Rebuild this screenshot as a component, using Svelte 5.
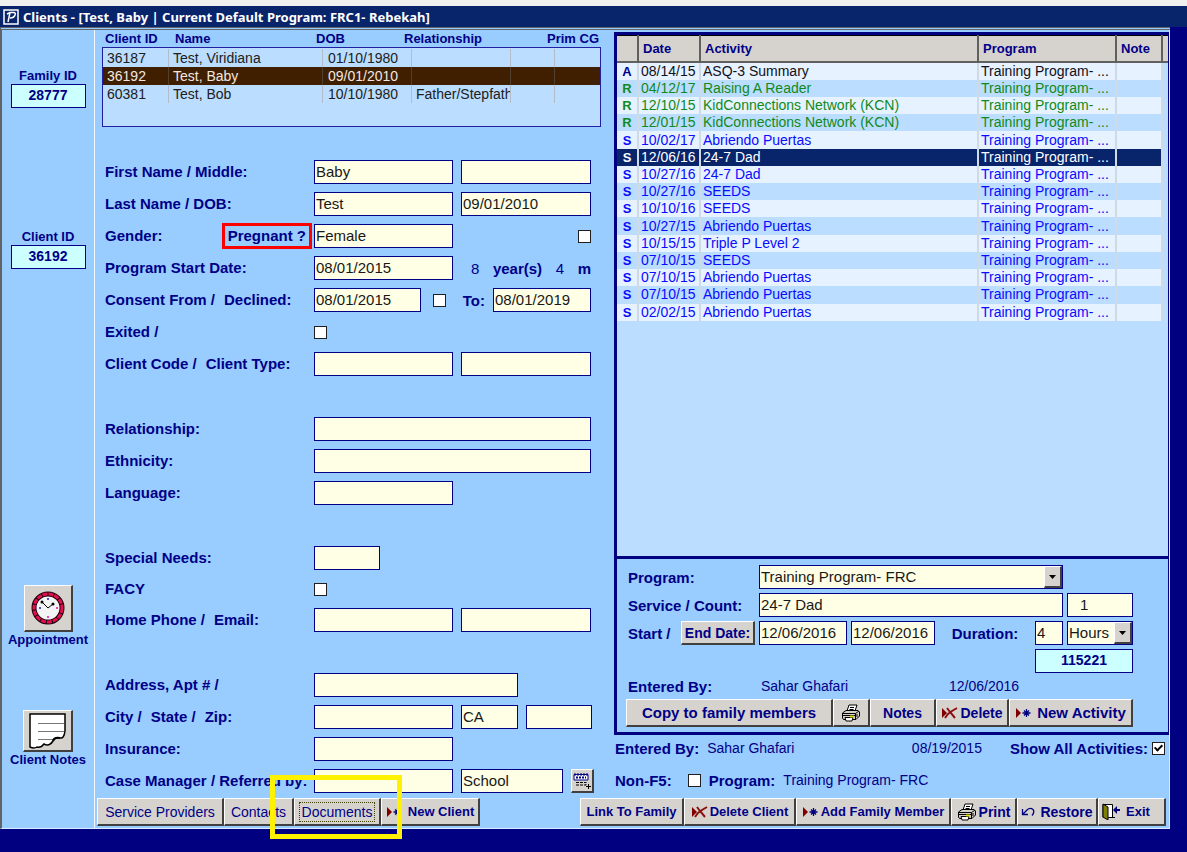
<script lang="ts">
  type Client = { id: string; name: string; dob: string; relationship: string };
  type Activity = { code: string; date: string; activity: string; selected?: boolean };

  const clients: Client[] = [
    { id: '36187', name: 'Test, Viridiana', dob: '01/10/1980', relationship: '' },
    { id: '36192', name: 'Test, Baby', dob: '09/01/2010', relationship: '' },
    { id: '60381', name: 'Test, Bob', dob: '10/10/1980', relationship: 'Father/Stepfath' }
  ];

  const activities: Activity[] = [
    { code: 'A', date: '08/14/15', activity: 'ASQ-3 Summary' },
    { code: 'R', date: '04/12/17', activity: 'Raising A Reader' },
    { code: 'R', date: '12/10/15', activity: 'KidConnections Network (KCN)' },
    { code: 'R', date: '12/01/15', activity: 'KidConnections Network (KCN)' },
    { code: 'S', date: '10/02/17', activity: 'Abriendo Puertas' },
    { code: 'S', date: '12/06/16', activity: '24-7 Dad', selected: true },
    { code: 'S', date: '10/27/16', activity: '24-7 Dad' },
    { code: 'S', date: '10/27/16', activity: 'SEEDS' },
    { code: 'S', date: '10/10/16', activity: 'SEEDS' },
    { code: 'S', date: '10/27/15', activity: 'Abriendo Puertas' },
    { code: 'S', date: '10/15/15', activity: 'Triple P Level 2' },
    { code: 'S', date: '07/10/15', activity: 'SEEDS' },
    { code: 'S', date: '07/10/15', activity: 'Abriendo Puertas' },
    { code: 'S', date: '07/10/15', activity: 'Abriendo Puertas' },
    { code: 'S', date: '02/02/15', activity: 'Abriendo Puertas' }
  ];

  let selectedClient = $state('36192');
</script>

{#snippet printer()}
  <svg class="icon" width="20" height="18" viewBox="0 0 20 18" aria-hidden="true">
    <path d="M6 7 L8 1 H16 L14 7 Z" fill="#fff" stroke="#000" />
    <path d="M9 3.500 H13 M8.500 5.500 H12.500" stroke="#000" />
    <path d="M1.500 9 L5 6.500 H17 L18.500 8 V12 L15 15.500 H2.500 L1.500 14 Z" fill="#d4d0c8" stroke="#000" />
    <path d="M1.500 9.500 H14.500 L18 7 M14.500 9.500 V15 M2 11.500 H14 M16 10 V13" stroke="#000" fill="none" />
    <path d="M4 13.500 H12 L11 17 H5 Z" fill="#fff" stroke="#000" />
    <path d="M9 12.500 H13" stroke="#e8e000" stroke-width="2" />
  </svg>
{/snippet}

{#snippet addMark()}
  <svg class="icon" width="17" height="12" viewBox="0 0 17 12" aria-hidden="true">
    <path d="M1 1 L6 6 L1 11 Z" fill="#800000" />
    <path d="M11.500 2 V10 M7.500 6 H15.500 M9 3.500 L14 8.500 M14 3.500 L9 8.500" stroke="#000080" stroke-width="1.300" />
  </svg>
{/snippet}

{#snippet deleteMark()}
  <svg class="icon" width="17" height="12" viewBox="0 0 17 12" aria-hidden="true">
    <path d="M1 1 L6 6 L1 11 Z" fill="#800000" />
    <path d="M4 11 L7 7 L11 4 L16 1 M6 1 L9 5 L14 11" stroke="#8c1010" stroke-width="2" fill="none" />
  </svg>
{/snippet}

{#snippet arrow()}
  <span class="arrow">
    <svg width="7" height="4" viewBox="0 0 7 4" aria-hidden="true"><path d="M0 0 H7 L3.500 4 Z" fill="#000" /></svg>
  </span>
{/snippet}

<div class="app">
  <header class="title-bar">
    <svg width="16" height="16" viewBox="0 0 16 16" aria-hidden="true">
      <rect x="1" y="1" width="14" height="14" fill="#08246b" stroke="#fff" stroke-width="1.500" />
      <path d="M7 3.500 L5 13 M4 5 L7 3.500 H11 Q13 4 12 6 Q11 9 7 9" fill="none" stroke="#fff" stroke-width="1.500" />
    </svg>
    <h1>Clients - [Test, Baby | Current Default Program: FRC1- Rebekah]</h1>
  </header>

  <div class="window">
    <aside class="sidebar">
      <label class="caption" for="family-id">Family ID</label>
      <input id="family-id" class="id-box" value="28777" />
      <label class="caption client-caption" for="client-id">Client ID</label>
      <input id="client-id" class="id-box" value="36192" />

      <button class="tool appointment" aria-labelledby="appointment-text">
        <svg width="34" height="34" viewBox="0 0 34 34" aria-hidden="true">
          <circle cx="17" cy="17" r="14" fill="#f4f4f4" stroke="#200010" stroke-width="5" />
          <circle cx="17" cy="17" r="14" fill="none" stroke="#e0104c" stroke-width="3" stroke-dasharray="5 1" />
          <path d="M11 11 L17 17 L22 13" stroke="#000" stroke-width="1" fill="none" />
          <circle cx="11" cy="11" r="1.500" /><circle cx="22" cy="13" r="1.500" />
          <path d="M16 8 H18 M8 17 H10" stroke="#5050e0" stroke-width="2" />
          <path d="M16 26 H18 M25 17 H27" stroke="#f040d0" stroke-width="2" />
        </svg>
      </button>
      <span class="caption" id="appointment-text">Appointment</span>

      <button class="tool notes" aria-labelledby="notes-text">
        <svg width="38" height="36" viewBox="0 0 38 36" aria-hidden="true">
          <path d="M1 1 H36 V18 Q35 26 31 25 Q26 24 24 28 Q20 34 15 31 Q12 35 8 34 Q5 36 1 34 Z" fill="#fff" stroke="#000" stroke-width="1.500" />
          <path d="M9 10.500 H35 M9 18.500 H35 M9 26.500 H24" stroke="#777" />
          <path d="M24 28 Q25 24 31 25" stroke="#000" stroke-width="2" fill="none" />
        </svg>
      </button>
      <span class="caption" id="notes-text">Client Notes</span>
    </aside>

    <div class="main">
      <div class="columns">
        <section class="client">
          <table class="client-list">
            <thead>
              <tr><th>Client ID</th><th>Name</th><th>DOB</th><th>Relationship</th><th>Prim CG</th></tr>
            </thead>
            <tbody>
              {#each clients as client}
                <tr class:selected={client.id === selectedClient} onclick={() => (selectedClient = client.id)}>
                  <td>{client.id}</td>
                  <td>{client.name}</td>
                  <td>{client.dob}</td>
                  <td>{client.relationship}</td>
                  <td></td>
                  <td></td>
                </tr>
              {/each}
            </tbody>
          </table>

          <form class="details">
            <div class="group">
              <div class="row">
                <label for="first-name">First Name / Middle:</label>
                <input id="first-name" class="w-main" value="Baby" />
                <input class="w-side" aria-label="Middle name" />
              </div>
              <div class="row">
                <label for="last-name">Last Name / DOB:</label>
                <input id="last-name" class="w-main" value="Test" />
                <input class="w-side" aria-label="Date of birth" value="09/01/2010" />
              </div>
              <div class="row gender">
                <div class="split">
                  <label for="gender">Gender:</label>
                  <label class="pregnant" for="pregnant">Pregnant ?</label>
                </div>
                <input id="gender" class="w-main" value="Female" />
                <input id="pregnant" class="push" type="checkbox" />
              </div>
              <div class="row">
                <label for="start-date">Program Start Date:</label>
                <input id="start-date" class="w-main" value="08/01/2015" />
                <div class="age"><span>8</span><b>year(s)</b><span>4</span><b>m</b></div>
              </div>
              <div class="row">
                <div class="pair"><label for="consent">Consent From /</label><label for="declined">Declined:</label></div>
                <input id="consent" class="w-date" value="08/01/2015" />
                <input id="declined" class="declined" type="checkbox" />
                <label class="push" for="consent-to">To:</label>
                <input id="consent-to" class="w-until" value="08/01/2019" />
              </div>
              <div class="row">
                <label for="exited">Exited /</label>
                <input id="exited" type="checkbox" />
              </div>
              <div class="row">
                <div class="pair"><label for="client-code">Client Code /</label><label for="client-type">Client Type:</label></div>
                <input id="client-code" class="w-main" />
                <input id="client-type" class="w-side" />
              </div>
            </div>

            <div class="group">
              <div class="row">
                <label for="relationship">Relationship:</label>
                <input id="relationship" class="w-full" />
              </div>
              <div class="row">
                <label for="ethnicity">Ethnicity:</label>
                <input id="ethnicity" class="w-full" />
              </div>
              <div class="row">
                <label for="language">Language:</label>
                <input id="language" class="w-main" />
              </div>
            </div>

            <div class="group tight">
              <div class="row">
                <label for="needs">Special Needs:</label>
                <input id="needs" class="w-small" />
              </div>
              <div class="row">
                <label for="facy">FACY</label>
                <input id="facy" type="checkbox" />
              </div>
              <div class="row">
                <div class="pair"><label for="phone">Home Phone /</label><label for="email">Email:</label></div>
                <input id="phone" class="w-main" />
                <input id="email" class="w-side" />
              </div>
            </div>

            <div class="group">
              <div class="row">
                <label for="address">Address, Apt # /</label>
                <input id="address" class="w-address" />
              </div>
              <div class="row">
                <div class="pair"><label for="city">City /</label><label for="state">State /</label><label for="zip">Zip:</label></div>
                <input id="city" class="w-main" />
                <input id="state" class="w-state" value="CA" />
                <input id="zip" class="w-small" />
              </div>
              <div class="row">
                <label for="insurance">Insurance:</label>
                <input id="insurance" class="w-main" />
              </div>
              <div class="row">
                <label for="manager">Case Manager / Referred by:</label>
                <input id="manager" class="w-main" />
                <input class="w-referred" aria-label="Referred by" value="School" />
                <button class="pick push" type="button" aria-label="Add referral">
                  <svg width="18" height="16" viewBox="0 0 18 16" aria-hidden="true">
                    <path d="M1 1.500 H15 V7 H1 Z" fill="#fff" stroke="#000080" />
                    <path d="M1 1.500 H15 M3 4.500 H13" stroke="#000080" stroke-width="2" stroke-dasharray="2 1" />
                    <path d="M3 9.500 H13 M3 12 H13 V9" stroke="#000" stroke-dasharray="3 1" fill="none" />
                    <path d="M15.500 11 V16 M13 13.500 H18" stroke="#000" />
                  </svg>
                </button>
              </div>
            </div>
          </form>
        </section>

        <section class="activity">
          <div class="activity-list">
            <table class="activities">
              <colgroup>
                <col class="c-code" /><col class="c-date" /><col /><col class="c-program" /><col class="c-note" /><col class="c-end" />
              </colgroup>
              <thead>
                <tr><th></th><th>Date</th><th>Activity</th><th>Program</th><th>Note</th><th></th></tr>
              </thead>
              <tbody>
                {#each activities as item}
                  <tr class="type-{item.code}" class:selected={item.selected}>
                    <td class="code">{item.code}</td>
                    <td>{item.date}</td>
                    <td>{item.activity}</td>
                    <td>Training Program- ...</td>
                    <td></td>
                    <td class="end"></td>
                  </tr>
                {/each}
              </tbody>
            </table>
          </div>

          <form class="activity-form">
            <div class="act-row">
              <label for="program">Program:</label>
              <div class="select w-program">
                <select id="program"><option>Training Program- FRC</option></select>
                {@render arrow()}
              </div>
            </div>
            <div class="act-row">
              <label for="service">Service / Count:</label>
              <input id="service" class="w-program" value="24-7 Dad" />
              <input class="w-small count" aria-label="Count" value="1" />
            </div>
            <div class="act-row">
              <div class="split">
                <label for="start">Start /</label>
                <button class="end-date" type="button">End Date:</button>
              </div>
              <input id="start" class="w-start" value="12/06/2016" />
              <input class="w-end" aria-label="End date" value="12/06/2016" />
              <label class="duration" for="duration">Duration:</label>
              <input id="duration" class="w-amount" value="4" />
              <div class="select w-small">
                <select aria-label="Duration unit"><option>Hours</option></select>
                {@render arrow()}
              </div>
            </div>
            <div class="act-row right">
              <input class="id-box w-number" aria-label="Activity number" value="115221" />
            </div>
            <div class="act-row entered">
              <b>Entered By:</b>
              <span class="by">Sahar Ghafari</span>
              <span>12/06/2016</span>
            </div>
            <div class="bar">
              <button class="b-copy large" type="button">Copy to family members</button>
              <button class="b-print" type="button" aria-label="Print">{@render printer()}</button>
              <button class="b-notes" type="button">Notes</button>
              <button class="b-delete" type="button">{@render deleteMark()}Delete</button>
              <button class="b-activity large" type="button">{@render addMark()}New Activity</button>
            </div>
          </form>

          <div class="info">
            <b>Entered By:</b>
            <span>Sahar Ghafari</span>
            <span class="push">08/19/2015</span>
            <label class="show-all" for="show-all">Show All Activities:</label>
            <input id="show-all" type="checkbox" checked />
          </div>
          <div class="info">
            <label class="non" for="non-f5">Non-F5:</label>
            <input id="non-f5" type="checkbox" />
            <b>Program:</b>
            <span>Training Program- FRC</span>
          </div>
        </section>
      </div>

      <footer class="footer">
        <div class="bar">
          <button class="b-providers plain">Service Providers</button>
          <button class="b-contacts plain">Contacts</button>
          <div class="marked">
            <button class="b-documents plain"><span>Documents</span></button>
            <i class="highlight"></i>
          </div>
          <button class="b-client small">{@render addMark()}New Client</button>
        </div>
        <div class="bar">
          <button class="b-link small">Link To Family</button>
          <button class="b-remove small">{@render deleteMark()}Delete Client</button>
          <button class="b-member small">{@render addMark()}Add Family Member</button>
          <button class="b-printer">{@render printer()}Print</button>
          <button class="b-restore">
            <svg class="icon" width="14" height="10" viewBox="0 0 14 10" aria-hidden="true">
              <path d="M1.500 2 V7.500 H7 M1.500 7.500 L6 3 Q9 0 12 2.500 Q14 5 11 8.500" fill="none" stroke="#000080" stroke-width="1.300" />
            </svg>Restore
          </button>
          <button class="b-exit small">
            <svg class="icon" width="19" height="17" viewBox="0 0 19 17" aria-hidden="true">
              <path d="M1 14.500 V1.500 H10.500 V14.500 H6" fill="#fff" stroke="#000" />
              <path d="M1 1 L6 4 V17 L1 14 Z" fill="#808000" stroke="#000" />
              <path d="M11 7 L15 3 V6 H18 V8 H15 V11 Z" fill="#000080" />
              <path d="M10 14.500 H13" stroke="#000" />
            </svg>Exit
          </button>
        </div>
      </footer>
    </div>
  </div>
</div>

<style>
  :global(body) {
    background: #000080;
  }

  .app {
    box-sizing: border-box;
    min-height: 100vh;
    font-family: "Liberation Sans", Arial, sans-serif;
    font-size: 15px;
    color: #000087;
    border-top: 6px solid #f0f0f0;
  }

  .app *,
  .app *::before {
    box-sizing: border-box;
  }

  .title-bar {
    display: flex;
    align-items: center;
    gap: 4px;
    height: 21px;
    padding-left: 3px;
    background: #08246b;
    color: #fff;
  }

  h1 {
    margin: 0;
    font-family: "Noto Sans", "Open Sans", sans-serif;
    font-size: 13px;
    line-height: 20px;
    white-space: nowrap;
  }

  .window {
    display: grid;
    grid-template-columns: 92px minmax(0, 1fr);
    margin-right: 17px;
    background: #99ccff;
    border-top: 3px double #606468;
    border-left: 2px solid #606468;
    border-bottom: 1px solid #d8ecff;
  }

  .main {
    border-left: 1px solid #f0f8ff;
    border-right: 1px solid #d8ecff;
  }

  .columns {
    display: grid;
    grid-template-columns: 519px minmax(0, 1fr);
  }

  label,
  b {
    font-weight: bold;
    white-space: nowrap;
  }

  input,
  select,
  button {
    margin: 0;
    font-family: inherit;
    font-size: 15px;
    color: inherit;
    border-radius: 0;
    flex: none;
  }

  input,
  select {
    height: 24px;
    padding: 0 1px 2px;
    background: #ffffe6;
    color: #181818;
    border: 1px solid #000087;
    outline: none;
  }

  input[type='checkbox'] {
    display: grid;
    place-items: center;
    width: 13px;
    height: 13px;
    padding: 0;
    appearance: none;
    background: #fff;
    border: 1px solid #202020;
  }

  input[type='checkbox']:checked::before {
    content: '';
    width: 5px;
    height: 8px;
    margin-bottom: 2px;
    border: solid #000;
    border-width: 0 2px 2px 0;
    transform: rotate(45deg);
  }

  .push {
    margin-left: auto;
  }

  /* sidebar */
  .sidebar {
    display: flex;
    flex-direction: column;
    align-items: center;
    padding-top: 38px;
  }

  .caption {
    font-size: 13px;
    font-weight: bold;
    line-height: 16px;
    white-space: nowrap;
  }

  .id-box {
    width: 75px;
    background: #ccffff;
    color: #000087;
    font-size: 14px;
    font-weight: bold;
    text-align: center;
  }

  .client-caption {
    margin-top: 121px;
  }

  /* buttons */
  button {
    display: flex;
    align-items: center;
    justify-content: center;
    gap: 2px;
    height: 28px;
    padding: 0;
    background: #d6d3ce;
    border: solid;
    border-width: 1px 2px 2px 1px;
    border-color: #fff #404040 #404040 #fff;
    font-size: 14px;
    font-weight: bold;
    white-space: nowrap;
  }

  .tool.appointment {
    width: 49px;
    height: 47px;
    margin-top: 316px;
  }

  .tool.notes {
    width: 50px;
    height: 42px;
    margin-top: 62px;
  }

  button.plain {
    font-weight: normal;
  }

  button.small {
    font-size: 13px;
  }

  button.large {
    gap: 5px;
    font-size: 15px;
  }

  .icon {
    flex: none;
  }

  .bar {
    display: flex;
  }

  /* client list */
  .client {
    padding-left: 7px;
  }

  .client-list {
    display: block;
    width: 499px;
    font-size: 14px;
  }

  .client-list thead,
  .client-list tbody {
    display: block;
  }

  .client-list tr {
    display: grid;
    grid-template-columns: 66px 154px 89px 99px 44px 1fr;
  }

  .client-list thead tr {
    grid-template-columns: 70px 141px 88px 143px 1fr;
    padding-left: 3px;
  }

  .client-list th {
    padding: 0;
    font-size: 13px;
    line-height: 17px;
    text-align: left;
    white-space: nowrap;
  }

  .client-list tbody {
    height: 80px;
    padding-top: 1px;
    background: #bbddff;
    border: 1px solid #2020a0;
    color: #202020;
  }

  .client-list td {
    height: 18px;
    padding: 0 0 0 4px;
    line-height: 18px;
    white-space: nowrap;
    overflow: hidden;
    border-right: 1px solid #b4bcc8;
  }

  .client-list td:nth-child(3) {
    padding-left: 5px;
  }

  .client-list td:last-child {
    border-right: 0;
  }

  .client-list tr.selected {
    background: #401f00;
    color: #f0e8e0;
  }

  .client-list tr.selected td {
    border-color: #504030;
  }

  /* client form */
  .details {
    display: flex;
    flex-direction: column;
    gap: 41px;
    padding: 33px 0 0 3px;
  }

  .group {
    display: flex;
    flex-direction: column;
    gap: 8px;
  }

  .group.tight {
    gap: 7px;
  }

  .row {
    display: flex;
    align-items: center;
    gap: 8px;
    width: 486px;
    height: 24px;
  }

  .row > :first-child {
    width: 201px;
    flex: none;
    line-height: 20px;
  }

  .pair {
    display: flex;
    gap: 9px;
  }

  .split {
    display: flex;
    align-items: center;
    justify-content: space-between;
  }

  .gender {
    gap: 2px;
  }

  .gender > .split:first-child {
    width: 207px;
  }

  .pregnant {
    padding: 0 3px;
    border: 3px solid #f00;
  }

  .declined {
    margin-left: 4px;
  }

  .age {
    display: flex;
    flex: 1;
    justify-content: space-between;
    padding-left: 10px;
  }

  .w-main {
    width: 139px;
  }

  .w-side {
    width: 130px;
  }

  .w-date {
    width: 107px;
  }

  .w-until {
    width: 98px;
  }

  .w-full {
    width: 277px;
  }

  .w-small {
    width: 66px;
  }

  .w-address {
    width: 204px;
  }

  .w-state {
    width: 57px;
  }

  .w-referred {
    width: 102px;
  }

  .pick {
    width: 23px;
    height: 24px;
  }

  /* activity list */
  .activity {
    padding-top: 2px;
  }

  .activity-list {
    height: 527px;
    background: #bbddff;
    border: solid #000080;
    border-width: 3px 1px 3px 3px;
  }

  .activities {
    width: 100%;
    height: 286px;
    table-layout: fixed;
    border-collapse: collapse;
    border-top: 1px solid #000;
    font-size: 14px;
  }

  .c-code {
    width: 21px;
  }

  .c-date {
    width: 62px;
  }

  .c-program {
    width: 138px;
  }

  .c-note {
    width: 46px;
  }

  .c-end {
    width: 6px;
  }

  .activities th {
    height: 26px;
    padding: 0 4px;
    background: #d6d3ce;
    border: solid #606060;
    border-width: 0 2px 2px 0;
    font-size: 13px;
    text-align: left;
  }

  .activities th:last-child {
    padding: 0;
    border-right: 0;
  }

  .activities td {
    padding: 0 2px;
    line-height: 17px;
    white-space: nowrap;
    overflow: hidden;
    border-right: 2px solid #d0dae4;
  }

  .activities .code {
    padding: 0;
    font-size: 13px;
    font-weight: bold;
    text-align: center;
  }

  .activities tbody tr:nth-child(odd) {
    background: #e6f2ff;
  }

  .activities tbody .end {
    padding: 0;
    background: #bbddff;
    border-right: 0;
  }

  .type-A {
    color: #101020;
  }

  .type-A .code {
    color: #000087;
  }

  .type-R {
    color: #108a20;
  }

  .type-S {
    color: #0a0aff;
  }

  .activities tbody tr.selected {
    background: #08246b;
    color: #fff;
  }

  /* activity form */
  .activity-form {
    display: flex;
    flex-direction: column;
    gap: 4px;
    padding: 6px 0 5px 9px;
    border: solid #000080;
    border-width: 0 1px 3px 3px;
  }

  .act-row {
    display: flex;
    align-items: center;
    gap: 4px;
    width: 507px;
    height: 24px;
    padding-left: 2px;
  }

  .act-row > :first-child {
    width: 127px;
    flex: none;
  }

  .act-row .w-program {
    width: 304px;
  }

  .w-start {
    width: 88px;
  }

  .w-end {
    width: 84px;
  }

  .w-amount {
    width: 28px;
  }

  .act-row.right {
    justify-content: flex-end;
  }

  .act-row .w-number {
    width: 98px;
  }

  .count {
    padding-left: 12px;
  }

  .duration {
    margin: 0 auto;
  }

  .end-date {
    width: 74px;
    height: 24px;
  }

  .act-row.entered {
    height: 18px;
    font-size: 14px;
  }

  .entered b,
  .info b {
    font-size: 15px;
  }

  .entered .by {
    width: 186px;
    padding-left: 2px;
  }

  .select {
    display: grid;
    flex: none;
  }

  .select select {
    grid-area: 1 / 1;
    width: 100%;
    appearance: none;
  }

  .arrow {
    display: grid;
    grid-area: 1 / 1;
    place-items: center;
    align-self: center;
    justify-self: end;
    width: 18px;
    height: 22px;
    margin-right: 1px;
    background: #d6d3ce;
    border: solid;
    border-width: 1px 2px 2px 1px;
    border-color: #fff #404040 #404040 #fff;
    pointer-events: none;
  }

  .info {
    display: flex;
    align-items: center;
    gap: 8px;
    height: 24px;
    margin-top: 8px;
    padding: 0 4px 0 1px;
    font-size: 14px;
  }

  .info label {
    font-size: 15px;
  }

  .activity-form + .info {
    margin-top: 1px;
  }

  .show-all {
    padding-left: 20px;
  }

  .info label + input {
    margin-left: -4px;
  }

  .info .non {
    padding-right: 12px;
  }

  /* footer */
  .footer {
    display: flex;
    justify-content: space-between;
    padding: 5px 3px 2px 2px;
  }

  .marked {
    position: relative;
  }

  .highlight {
    position: absolute;
    top: -23px;
    left: -24px;
    width: 132px;
    height: 64px;
    border: 5px solid #fff200;
    pointer-events: none;
  }

  .b-documents span {
    padding: 1px 2px;
    border: 1px dotted #404000;
  }

  .b-copy {
    width: 207px;
  }

  .b-print {
    width: 37px;
  }

  .b-notes {
    width: 66px;
  }

  .b-delete {
    width: 73px;
  }

  .b-activity {
    width: 124px;
  }

  .b-providers {
    width: 127px;
  }

  .b-contacts {
    width: 70px;
  }

  .b-documents {
    width: 87px;
  }

  .b-client {
    width: 99px;
  }

  .b-link {
    width: 104px;
  }

  .b-remove {
    width: 112px;
  }

  .b-member {
    width: 155px;
  }

  .b-printer {
    width: 66px;
  }

  .b-restore {
    width: 81px;
  }

  .b-exit {
    width: 68px;
    justify-content: flex-start;
    padding-left: 3px;
  }

  .b-restore,
  .b-exit,
  .b-client {
    gap: 5px;
  }
</style>
